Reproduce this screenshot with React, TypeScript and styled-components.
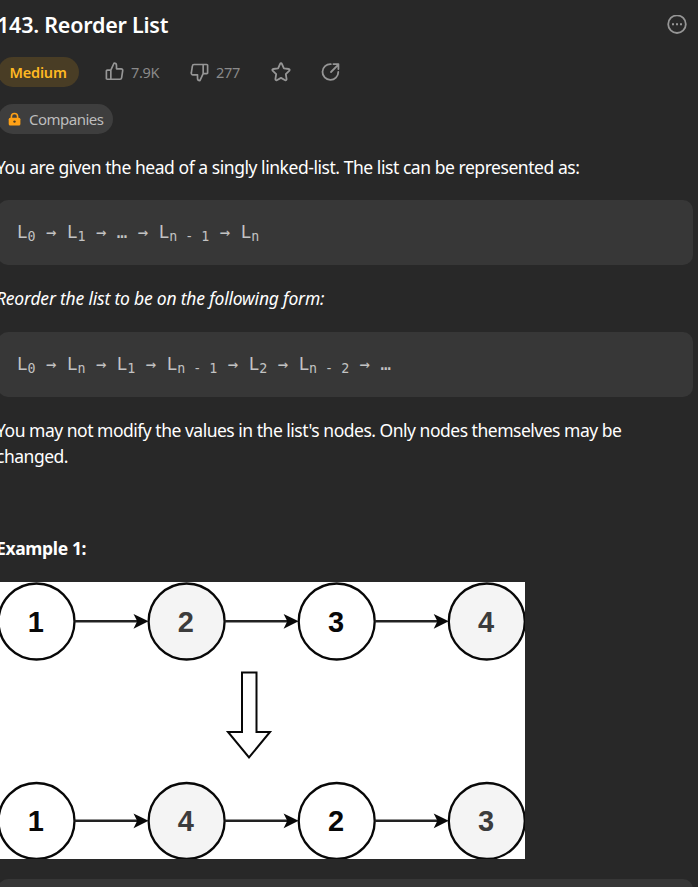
import React, { Fragment } from "react";
import styled, { createGlobalStyle } from "styled-components";

const GlobalStyle = createGlobalStyle`
  html, body { margin: 0; background: #282828; overflow: hidden; }
  * { box-sizing: border-box; }
`;

const Page = styled.main`
  width: 698px;
  height: 887px;
  overflow: hidden;
  background: #282828;
  color: #fff;
  font-family: "Noto Sans", "Open Sans", sans-serif;
`;

const Content = styled.div`
  display: flex;
  flex-direction: column;
  width: 695px;
  margin-left: -2px;
`;

const Header = styled.header`
  display: flex;
  align-items: center;
  justify-content: space-between;
  height: 50px;
  padding-right: 6px;
`;

const Title = styled.h1`
  margin: 0 0 0 -1px;
  font-size: 21.5px;
  font-weight: 600;
  line-height: 30px;
  letter-spacing: -0.23px;
  white-space: nowrap;
`;

const Icon = styled.svg`
  display: block;
  flex: none;
  fill: none;
  stroke: #969696;
  stroke-width: 1.8;
  stroke-linecap: round;
  stroke-linejoin: round;
`;

const Stats = styled.div`
  display: flex;
  align-items: center;
  height: 30px;
  margin-top: 7px;
`;

const Difficulty = styled.span`
  width: 81px;
  height: 30px;
  padding-left: 11.5px;
  border-radius: 15px;
  background: #493d25;
  color: #ffb822;
  font-size: 14.5px;
  font-weight: 600;
  line-height: 30px;
  letter-spacing: -0.2px;
`;

const Stat = styled.span<{ $gap: number; $width?: number }>`
  display: flex;
  align-items: center;
  gap: 7px;
  width: ${(p) => (p.$width ? `${p.$width}px` : "auto")};
  margin-left: ${(p) => p.$gap}px;
  color: #8a8a8a;
  font-size: 14.5px;
  line-height: 30px;
  letter-spacing: -0.3px;
`;

const Companies = styled.div`
  display: flex;
  align-items: center;
  gap: 8px;
  width: 115px;
  height: 30px;
  margin-top: 17px;
  padding-left: 10px;
  border-radius: 15px;
  background: #3e3e3e;
  color: #bdbdbd;
  font-size: 15px;
  letter-spacing: -0.5px;
`;

const Paragraph = styled.p<{ $top: number; $spacing?: number }>`
  margin: ${(p) => p.$top}px 0 0 -2px;
  font-size: 17.5px;
  line-height: 26px;
  letter-spacing: ${(p) => p.$spacing ?? -0.45}px;
  white-space: nowrap;
`;

const Emphasis = styled.em`
  font-style: italic;
`;

const Strong = styled.strong`
  font-weight: 700;
`;

const Code = styled.pre<{ $top: number }>`
  height: 65px;
  margin: ${(p) => p.$top}px 0 0;
  padding: 19px 0 0 19px;
  border-radius: 10px;
  background: #373737;
  color: #c3c3c3;
  font-family: "DejaVu Sans Mono", monospace;
  font-size: 17.4px;
  line-height: 26px;

  sub {
    position: relative;
    bottom: -3px;
    font-size: 13.3px;
    line-height: 0;
    vertical-align: baseline;
  }
`;

const Figure = styled.svg`
  display: block;
  width: 525px;
  height: 277px;
  margin: 21px 0 0 2px;
  background: #fff;
  font-family: "Liberation Sans", Arial, sans-serif;
  font-size: 29px;
  font-weight: 700;
  text-anchor: middle;
`;

const Sequence = ({ items }: { items: string[] }) => (
  <>
    {items.map((item, i) => (
      <Fragment key={i}>
        {i > 0 && " → "}
        {item === "…" ? item : <>L<sub>{item}</sub></>}
      </Fragment>
    ))}
  </>
);

const LinkedRow = ({ y, values }: { y: number; values: number[] }) => (
  <g>
    {values.map((value, i) => {
      const x = 36.5 + i * 150.1;
      const shaded = i % 2 === 1;
      return (
        <g key={i}>
          <circle cx={x} cy={y} r={38} fill={shaded ? "#f4f4f4" : "#fff"} stroke="#080808" strokeWidth={2.3} />
          <text x={x - 0.7} y={y + 10} fill={shaded ? "#3c3c3c" : "#080808"}>{value}</text>
          {i < values.length - 1 && (
            <>
              <path d={`M${x + 38} ${y - 0.2}H${x + 102}`} stroke="#222" strokeWidth={2.6} />
              <path d={`M${x + 112} ${y - 0.2}l-15 -7.4 3.7 7.4 -3.7 7.4z`} fill="#080808" />
            </>
          )}
        </g>
      );
    })}
  </g>
);

const THUMB = "M6.3 9.2V19H2.4a.9.9 0 0 1-.9-.9v-8a.9.9 0 0 1 .9-.9zM6.3 9.2 9.8 1.5c1.5 0 2.6 1.1 2.6 2.6v3.7h5a1.7 1.7 0 0 1 1.7 2l-1.2 7.7a1.7 1.7 0 0 1-1.7 1.5H6.3";

export default function App() {
  return (
    <Page>
      <GlobalStyle />
      <Content>
        <Header>
          <Title>143. Reorder List</Title>
          <Icon width="20" height="20" viewBox="0 0 20 20">
            <circle cx="10" cy="9.2" r="8.8" />
            <path d="M5 9.2h2M9 9.2h2M13 9.2h2" strokeLinecap="butt" strokeWidth="2" />
          </Icon>
        </Header>
        <Stats>
          <Difficulty>Medium</Difficulty>
          <Stat $gap={26} $width={85}>
            <Icon width="19" height="20" viewBox="0 0 20.5 21"><path d={THUMB} transform="translate(0 -.7)" /></Icon>
            7.9K
          </Stat>
          <Stat $gap={0} $width={81}>
            <Icon width="19" height="20" viewBox="0 0 20.5 21"><path d={THUMB} transform="rotate(180 10.25 10.7)" /></Icon>
            277
          </Stat>
          <Stat $gap={0}>
            <Icon width="20" height="20" viewBox="0 0 20 20">
              <path d="M9.1 1.8a1 1 0 0 1 1.8 0l2 4.5 4.9.7a1 1 0 0 1 .6 1.7l-3.6 3.5.8 5a1 1 0 0 1-1.4 1L10 15.9l-4.2 2.3a1 1 0 0 1-1.4-1l.8-5-3.6-3.5A1 1 0 0 1 2.2 7l4.9-.7z" />
            </Icon>
          </Stat>
          <Stat $gap={30}>
            <Icon width="20" height="20" viewBox="0 0 20 20">
              <path d="M9.8 2.1A7.9 7.9 0 1 0 17.3 10M10 10l6.6-6.6M12.4 2.1h5v5" />
            </Icon>
          </Stat>
        </Stats>
        <Companies>
          <svg width="13" height="14" viewBox="0 0 13 14">
            <path d="M3.4 7V4.6a3 3 0 0 1 6.2 0V7" fill="none" stroke="#ffa116" strokeWidth="1.6" />
            <rect x=".7" y="5.8" width="11.7" height="7.6" rx="1.5" fill="#ffa116" />
            <circle cx="6.5" cy="9.6" r="1.2" fill="#4b3b22" />
          </svg>
          Companies
        </Companies>
        <Paragraph $top={20}>You are given the head of a singly linked-list. The list can be represented as:</Paragraph>
        <Code $top={20}><Sequence items={["0", "1", "…", "n - 1", "n"]} /></Code>
        <Paragraph $top={20} $spacing={-0.2}><Emphasis>Reorder the list to be on the following form:</Emphasis></Paragraph>
        <Code $top={21}><Sequence items={["0", "n", "1", "n - 1", "2", "n - 2", "…"]} /></Code>
        <Paragraph $top={20} $spacing={-0.49}>
          You may not modify the values in the list's nodes. Only nodes themselves may be<br />changed.
        </Paragraph>
        <Paragraph $top={66} $spacing={-0.35}><Strong>Example 1:</Strong></Paragraph>
        <Figure viewBox="0 0 525 277">
          <LinkedRow y={39.5} values={[1, 2, 3, 4]} />
          <path d="M242 90.5h14.5V150H270l-21 25.5L228 150h14z" fill="#fff" stroke="#080808" strokeWidth="2" />
          <LinkedRow y={239} values={[1, 4, 2, 3]} />
        </Figure>
        <Code $top={20} />
      </Content>
    </Page>
  );
}
